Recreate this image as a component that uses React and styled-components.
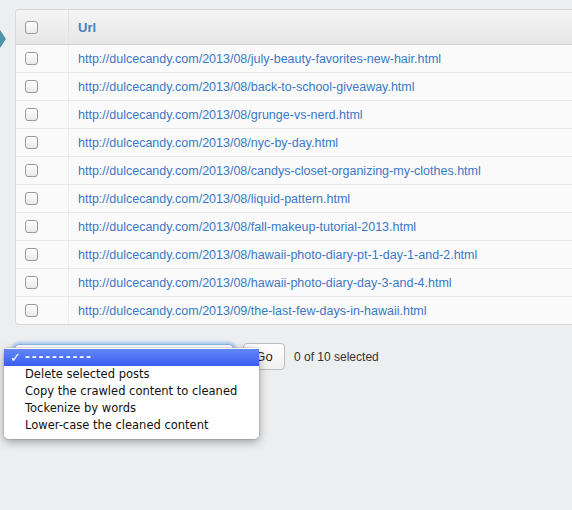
import { createGlobalStyle } from 'styled-components';
import styled from 'styled-components';

const GlobalStyle = createGlobalStyle`
  html, body {
    margin: 0;
    padding: 0;
    background: #edeef0;
    overflow: hidden;
  }
  body {
    font-family: 'Liberation Sans', Arial, sans-serif;
  }
`;

const Page = styled.div`
  display: flex;
  width: 572px;
  height: 510px;
  padding-top: 9px;
  box-sizing: border-box;
`;

const ArrowCol = styled.div`
  width: 15px;
  flex-shrink: 0;
  padding-top: 21px;
`;

const Content = styled.div`
  flex: 1;
  min-width: 0;
`;

const Panel = styled.div`
  width: 580px;
  background: #fff;
  border: 1px solid #d9d9d9;
  border-right: none;
  border-radius: 4px 0 0 4px;
  overflow: hidden;
`;

const Row = styled.div`
  display: grid;
  grid-template-columns: 53px 1fr;
  height: ${(p) => (p.$header ? '34px' : '27px')};
  background: ${(p) =>
    p.$header ? 'linear-gradient(#f5f5f5, #e6e6e6)' : '#fafafa'};
  border-bottom: 1px solid ${(p) => (p.$header ? '#d3d3d3' : '#e6e6e6')};
  &:last-child {
    border-bottom: none;
  }
`;

const CheckCell = styled.div`
  display: flex;
  align-items: center;
  padding-left: 9px;
  border-right: 1px solid ${(p) => (p.$header ? '#e2e2e2' : '#eeeeee')};
`;

const Checkbox = styled.span`
  display: block;
  width: 11px;
  height: 11px;
  border: 1px solid #9a9a9a;
  border-radius: 3px;
  background: linear-gradient(#ffffff, #e9e9e9);
  box-shadow: inset 0 1px 0 #fff;
`;

const UrlCell = styled.div`
  display: flex;
  align-items: center;
  padding-left: 9px;
  font-size: ${(p) => (p.$header ? '13px' : '12.5px')};
  font-weight: ${(p) => (p.$header ? 'bold' : 'normal')};
  color: ${(p) => (p.$header ? '#4a7ec2' : '#3b78c6')};
  white-space: nowrap;
`;

const Actions = styled.div`
  position: relative;
  display: flex;
  align-items: center;
  margin-top: 18px;
`;

const SelectBox = styled.div`
  width: 218px;
  height: 24px;
  margin-left: -1px;
  border-radius: 5px;
  border: 1px solid #8fb3e6;
  background: #fff;
  box-shadow: 0 0 3px 2px #a8c8f4;
`;

const GoButton = styled.div`
  margin-left: 9px;
  width: 40px;
  height: 25px;
  border: 1px solid #bdbdbd;
  border-radius: 4px;
  background: linear-gradient(#ffffff, #f0f0f0);
  display: flex;
  align-items: center;
  justify-content: center;
  font-size: 13px;
  color: #222;
`;

const Counter = styled.span`
  margin-left: 9px;
  font-size: 12px;
  color: #333;
`;

const Menu = styled.div`
  position: absolute;
  left: -11px;
  top: 5px;
  width: 255px;
  padding: 1px 0 5px;
  background: rgba(255, 255, 255, 0.98);
  border-radius: 5px;
  box-shadow: 0 3px 10px rgba(0, 0, 0, 0.35), 0 0 0 1px rgba(0, 0, 0, 0.08);
  font-family: 'DejaVu Sans', sans-serif;
  font-size: 11.5px;
`;

const Option = styled.div`
  position: relative;
  height: 17px;
  line-height: 17px;
  padding-left: 21px;
  color: ${(p) => (p.$active ? '#fff' : '#111')};
  background: ${(p) =>
    p.$active ? 'linear-gradient(#6287f7, #3a5ef0)' : 'transparent'};
`;

const Dashes = styled.span`
  letter-spacing: 2px;
  font-weight: bold;
`;

const Check = styled.span`
  position: absolute;
  left: 6px;
  top: 0;
  font-size: 13px;
  font-weight: bold;
`;

const urls = [
  'july-beauty-favorites-new-hair',
  'back-to-school-giveaway',
  'grunge-vs-nerd',
  'nyc-by-day',
  'candys-closet-organizing-my-clothes',
  'liquid-pattern',
  'fall-makeup-tutorial-2013',
  'hawaii-photo-diary-pt-1-day-1-and-2',
  'hawaii-photo-diary-day-3-and-4',
];

const options = [
  'Delete selected posts',
  'Copy the crawled content to cleaned',
  'Tockenize by words',
  'Lower-case the cleaned content',
];

export default function App() {
  const links = urls.map((u) => `http://dulcecandy.com/2013/08/${u}.html`);
  links.push('http://dulcecandy.com/2013/09/the-last-few-days-in-hawaii.html');

  return (
    <>
      <GlobalStyle />
      <Page>
        <ArrowCol>
          <svg width="6" height="18" viewBox="0 0 6 18">
            <path d="M0 0 L6 9 L0 18 Z" fill="#4f93ad" />
          </svg>
        </ArrowCol>
        <Content>
          <Panel>
            <Row $header>
              <CheckCell $header>
                <Checkbox />
              </CheckCell>
              <UrlCell $header>Url</UrlCell>
            </Row>
            {links.map((link) => (
              <Row key={link}>
                <CheckCell>
                  <Checkbox />
                </CheckCell>
                <UrlCell>{link}</UrlCell>
              </Row>
            ))}
          </Panel>
          <Actions>
            <SelectBox />
            <GoButton>Go</GoButton>
            <Counter>0 of 10 selected</Counter>
            <Menu>
              <Option $active>
                <Check>✓</Check>
                <Dashes>----------</Dashes>
              </Option>
              {options.map((o) => (
                <Option key={o}>{o}</Option>
              ))}
            </Menu>
          </Actions>
        </Content>
      </Page>
    </>
  );
}
